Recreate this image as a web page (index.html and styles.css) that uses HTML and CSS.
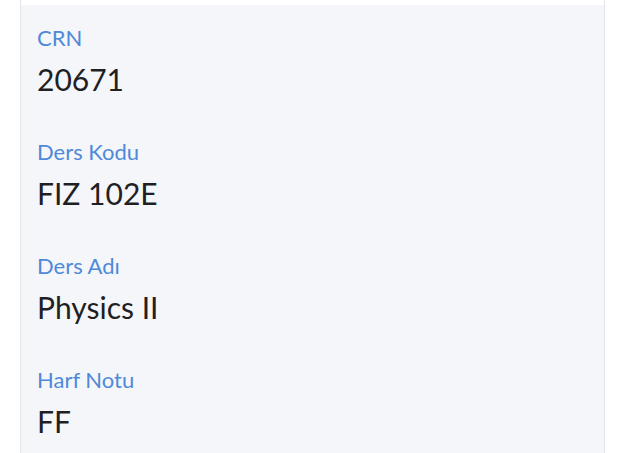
FILE: index.html
```html
<!DOCTYPE html>
<html lang="tr">
<head>
<meta charset="utf-8">
<link rel="stylesheet" href="styles.css">
</head>
<body>
<div class="card">
  <div class="panel">
    <div class="field">
      <div class="label">CRN</div>
      <div class="value">20671</div>
    </div>
    <div class="field">
      <div class="label">Ders Kodu</div>
      <div class="value">FIZ 102E</div>
    </div>
    <div class="field">
      <div class="label">Ders Adı</div>
      <div class="value">Physics II</div>
    </div>
    <div class="field">
      <div class="label">Harf Notu</div>
      <div class="value">FF</div>
    </div>
  </div>
</div>
</body>
</html>
```
FILE: styles.css
```css
html, body {
  margin: 0;
  padding: 0;
  background: #ffffff;
  height: 453px;
  overflow: hidden;
}
body {
  font-family: "Lato", "Noto Sans", sans-serif;
}
.card {
  margin-left: 20px;
  width: 585px;
  height: 453px;
  border-left: 1px solid #e4e5ea;
  border-right: 1px solid #e4e5ea;
  padding-top: 5px;
  box-sizing: border-box;
  background: #ffffff;
}
.panel {
  background: #f5f6fa;
  height: 100%;
  box-sizing: border-box;
  padding: 20px 16px 0 16px;
  overflow: hidden;
}
.field {
  height: 114px;
}
.label {
  font-size: 22px;
  line-height: 26px;
  color: #4f89d9;
}
.value {
  margin-top: 10px;
  font-size: 30px;
  line-height: 36px;
  color: #1f1f24;
}
```
